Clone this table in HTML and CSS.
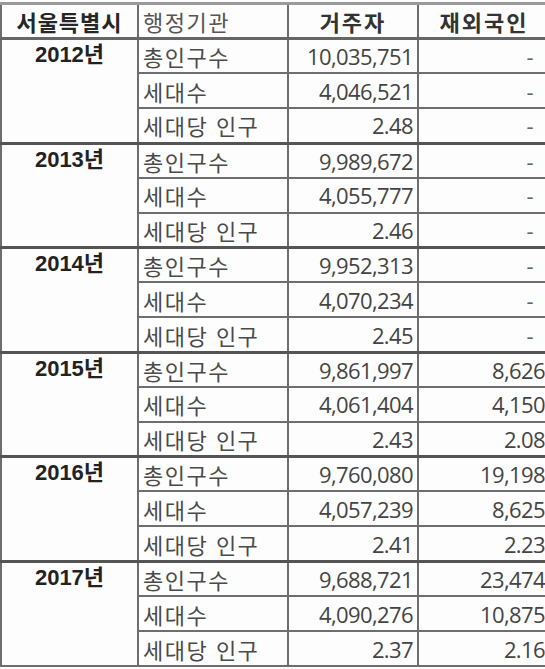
FILE: index.html
```html
<!DOCTYPE html>
<html lang="ko">
<head>
<meta charset="utf-8">
<link rel="stylesheet" href="styles.css">
</head>
<body>
<table class="stats">
  <colgroup>
    <col class="c1"><col class="c2"><col class="c3"><col class="c4">
  </colgroup>
  <thead>
    <tr>
      <th class="city">서울특별시</th>
      <th class="org">행정기관</th>
      <th class="hd">거주자</th>
      <th class="hd">재외국인</th>
    </tr>
  </thead>
  <tbody class="grp">
    <tr><td class="year" rowspan="3">2012년</td><td class="lbl">총인구수</td><td class="num">10,035,751</td><td class="num dash">-</td></tr>
    <tr><td class="lbl">세대수</td><td class="num">4,046,521</td><td class="num dash">-</td></tr>
    <tr><td class="lbl">세대당 인구</td><td class="num">2.48</td><td class="num dash">-</td></tr>
  </tbody>
  <tbody class="grp">
    <tr><td class="year" rowspan="3">2013년</td><td class="lbl">총인구수</td><td class="num">9,989,672</td><td class="num dash">-</td></tr>
    <tr><td class="lbl">세대수</td><td class="num">4,055,777</td><td class="num dash">-</td></tr>
    <tr><td class="lbl">세대당 인구</td><td class="num">2.46</td><td class="num dash">-</td></tr>
  </tbody>
  <tbody class="grp">
    <tr><td class="year" rowspan="3">2014년</td><td class="lbl">총인구수</td><td class="num">9,952,313</td><td class="num dash">-</td></tr>
    <tr><td class="lbl">세대수</td><td class="num">4,070,234</td><td class="num dash">-</td></tr>
    <tr><td class="lbl">세대당 인구</td><td class="num">2.45</td><td class="num dash">-</td></tr>
  </tbody>
  <tbody class="grp">
    <tr><td class="year" rowspan="3">2015년</td><td class="lbl">총인구수</td><td class="num">9,861,997</td><td class="num">8,626</td></tr>
    <tr><td class="lbl">세대수</td><td class="num">4,061,404</td><td class="num">4,150</td></tr>
    <tr><td class="lbl">세대당 인구</td><td class="num">2.43</td><td class="num">2.08</td></tr>
  </tbody>
  <tbody class="grp">
    <tr><td class="year" rowspan="3">2016년</td><td class="lbl">총인구수</td><td class="num">9,760,080</td><td class="num">19,198</td></tr>
    <tr><td class="lbl">세대수</td><td class="num">4,057,239</td><td class="num">8,625</td></tr>
    <tr><td class="lbl">세대당 인구</td><td class="num">2.41</td><td class="num">2.23</td></tr>
  </tbody>
  <tbody class="grp">
    <tr><td class="year" rowspan="3">2017년</td><td class="lbl">총인구수</td><td class="num">9,688,721</td><td class="num">23,474</td></tr>
    <tr><td class="lbl">세대수</td><td class="num">4,090,276</td><td class="num">10,875</td></tr>
    <tr><td class="lbl">세대당 인구</td><td class="num">2.37</td><td class="num">2.16</td></tr>
  </tbody>
</table>
</body>
</html>
```
FILE: styles.css
```css
html, body {
  margin: 0;
  padding: 0;
  background: #fdfdfd;
  overflow: hidden;
}
body {
  padding-top: 2px;
  font-family: "Noto Sans CJK KR", "Noto Sans", sans-serif;
}
.stats {
  width: 549px;
  border-collapse: collapse;
  table-layout: fixed;
}
.c1 { width: 137px; }
.c2 { width: 150px; }
.c3 { width: 130px; }
.c4 { width: 132px; }
.stats th, .stats td {
  border: 2px solid #6e6e6e;
  height: 35px;
  padding: 0 4px;
  line-height: 30px;
  box-sizing: border-box;
  overflow: hidden;
  white-space: nowrap;
}
.grp tr:first-child td {
  height: 34.6px;
}
.stats thead th {
  border-top: 3px solid #9a9a9a;
  border-bottom: 3px solid #666;
  height: 35px;
  font-size: 22px;
  line-height: 30px;
}
.city {
  font-weight: 700;
  color: #262626;
  text-align: center;
  letter-spacing: 1px;
}
.org {
  font-weight: 400;
  color: #555;
  text-align: left;
  padding-left: 6px;
  letter-spacing: 1.5px;
}
.hd {
  font-weight: 700;
  color: #333;
  text-align: center;
  letter-spacing: 2px;
}
.grp {
  border-top: 3px solid #555;
}
.year {
  vertical-align: top;
  text-align: center;
  font-family: "Liberation Sans", "Noto Sans CJK KR", sans-serif;
  font-weight: 700;
  font-size: 22px;
  color: #222;
  padding-top: 2px;
}
.lbl {
  font-size: 22px;
  color: #4a4a4a;
  padding-left: 6px;
  letter-spacing: 1.5px;
}
.num {
  text-align: right;
  font-family: "Open Sans", "Liberation Sans", sans-serif;
  font-size: 22px;
  color: #444;
  letter-spacing: -0.6px;
  padding-right: 5px;
}
td.num:last-child {
  padding-right: 4px;
}
td.num.dash {
  padding-right: 16px;
  color: #666;
}
```
